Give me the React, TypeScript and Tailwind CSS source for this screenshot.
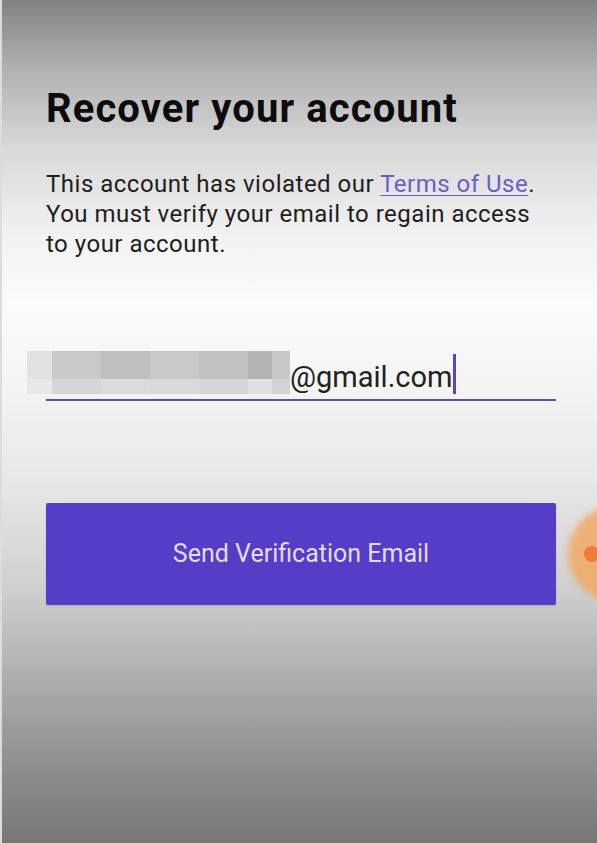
export default function App() {
  return (
    <div
      className="relative h-[843px] w-full overflow-hidden bg-[linear-gradient(to_bottom,#828282_0%,#b0b0b0_8%,#dadada_18%,#f2f2f2_28%,#fbfbfb_36%,#f4f4f4_46%,#e6e6e6_58%,#cfcfcf_70%,#a9a9a9_82%,#8e8e8e_91%,#777777_100%)]"
      style={{ fontFamily: 'Roboto, "Noto Sans", sans-serif' }}
    >
      <div className="flex flex-col pl-[46px] pr-[41px] pt-[86px]">
        <h1 className="text-[40px] font-bold leading-[46px] tracking-[1.1px] text-[#0c0c0c]">
          Recover your account
        </h1>

        <p className="mt-[37px] text-[24px] leading-[30px] tracking-[0.5px] text-[#1e1e1e]">
          This account has violated our{' '}
          <a className="text-[#6b5fc4] underline decoration-1 underline-offset-[3px]">Terms of Use</a>.
          <br />
          You must verify your email to regain access
          <br />
          to your account.
        </p>

        {/* email field */}
        <div className="relative mt-[90px] flex h-[52px] items-center border-b-2 border-[#5e4fa6]">
          <div className="-ml-[19px] -mt-[4px] flex h-[43px] w-[263px] flex-col">
            <div className="flex h-[28px]">
              <div className="w-[25px] bg-[#e2e2e2]" />
              <div className="w-[49px] bg-[#c9c9c9]" />
              <div className="w-[49px] bg-[#bfbfbf]" />
              <div className="w-[49px] bg-[#c9c9c9]" />
              <div className="w-[49px] bg-[#c2c2c2]" />
              <div className="w-[24px] bg-[#b6b3b3]" />
              <div className="w-[18px] bg-[#c8c8c8]" />
            </div>
            <div className="flex h-[15px]">
              <div className="w-[25px] bg-[#e8e8e8]" />
              <div className="w-[49px] bg-[#d6d6d6]" />
              <div className="w-[49px] bg-[#dbdbdb]" />
              <div className="w-[49px] bg-[#d9d9d9]" />
              <div className="w-[49px] bg-[#d6d6d6]" />
              <div className="w-[24px] bg-[#e0e0e0]" />
              <div className="w-[18px] bg-[#d3d3d3]" />
            </div>
          </div>
          <span className="mt-[6px] text-[29px] leading-none text-[#222]">@gmail.com</span>
          <span className="ml-[1px] h-[40px] w-[3px] bg-[#5a46b8]" />
        </div>

        <button className="mt-[102px] flex h-[102px] w-full items-center justify-center rounded-[2px] bg-[#553dc8] text-[25px] text-[#e4dcf6] shadow-[0_1px_2px_rgba(0,0,0,0.15)]">
          Send Verification Email
        </button>
      </div>

      {/* touch indicator */}
      <div className="absolute left-[568px] top-[506px] h-[96px] w-[96px] rounded-full bg-[#f4a257]/75 blur-[3px]" />
      <div className="absolute left-[584px] top-[546px] h-[16px] w-[16px] rounded-full bg-[#f07a3a]" />
      <div className="absolute left-0 top-0 h-full w-[2px] bg-[#d8dde2]" />
    </div>
  );
}
